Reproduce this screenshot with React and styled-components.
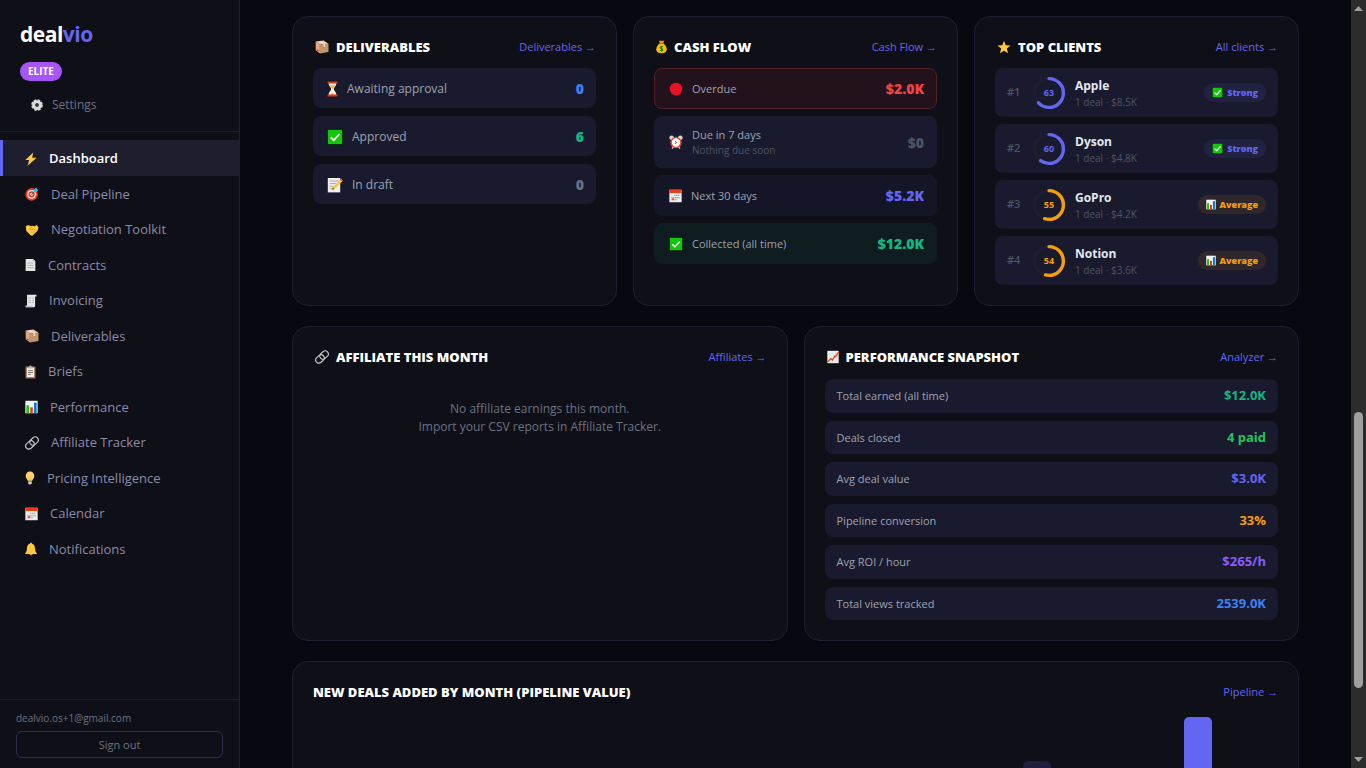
import styled, { createGlobalStyle } from "styled-components";

const colors = {
  page: "#080811",
  panel: "#0f0f18",
  row: "#1a1a2e",
  line: "#1e1e2e",
  indigo: "#6366f1",
  blue: "#3b82f6",
  green: "#10b981",
  lime: "#22c55e",
  amber: "#f59e0b",
  violet: "#8b5cf6",
  red: "#ef4444",
  slate: "#6b7280",
  muted: "#4b5563",
};

const GlobalStyle = createGlobalStyle`
  * {
    box-sizing: border-box;
  }

  body {
    margin: 0;
    background: ${colors.page};
    color: #fff;
    font-family: "Open Sans", "Noto Sans", sans-serif;
    font-size: 13px;
    line-height: 1.5;
  }

  a {
    color: inherit;
    text-decoration: none;
  }

  h2,
  p,
  ul {
    margin: 0;
    padding: 0;
  }

  ul {
    list-style: none;
  }
`;

/* ---------- icons ---------- */

// every glyph is drawn on a 16 unit high box, width is the first entry
const glyphs = {
  gear: [
    16,
    <>
      <circle cx="8" cy="8" r="6.2" fill="none" stroke="#d4d4d4" strokeWidth="3.2" strokeDasharray="3.27 1.6" />
      <circle cx="8" cy="8" r="4.4" fill="none" stroke="#dcdcdc" strokeWidth="4.2" />
      <circle cx="8" cy="8" r="2.2" fill="#3a3a3a" />
    </>,
  ],
  bolt: [
    14,
    <path d="M9.6 .4.4 9.2h4.4L3 15.8 13.6 6.4H8.4z" fill="#ffc83d" />,
  ],
  target: [
    16,
    <>
      <circle cx="7.6" cy="8.4" r="7.2" fill="#f03a17" />
      <circle cx="7.6" cy="8.4" r="5" fill="#fff" />
      <circle cx="7.6" cy="8.4" r="3.6" fill="#f03a17" />
      <circle cx="7.6" cy="8.4" r="1.6" fill="#fff" />
      <path d="M7.4 8.6 12 4" stroke="#0f6cbd" strokeWidth="1.2" />
      <path d="M10.4 5.6V2.8L13 .4l.5 2.2 2.1.5-2.5 2.5z" fill="#26c6f0" />
    </>,
  ],
  handshake: [
    16,
    <>
      <path d="M.8 3.6 3.6 2.4 7 3.8l1.4-.6 2.6.4 2.6-1.4 1.8 2.6-1 4-6 5.8-2-.6-4.8-5z" fill="#ffc83d" />
      <path d="M7.6 4.4 5.6 7.2l2 .4 2-1.2 4 3" fill="none" stroke="#e19747" strokeWidth=".9" />
      <path d="M10 12.4 8 10.6M11.6 11 9.4 9" stroke="#e19747" strokeWidth=".8" />
    </>,
  ],
  page: [
    13,
    <>
      <path d="M.8.8h8.6l2.8 2.8v11.6H.8z" fill="#e6e6e6" />
      <path d="M9.4.8v2.8h2.8z" fill="#b9b9b9" />
      <path d="M2.8 5.6h7.2M2.8 8.4h7.2M2.8 11.2h7.2" stroke="#a8a8a8" strokeWidth="1" />
    </>,
  ],
  receipt: [
    14,
    <>
      <path d="M2.4.8h11v2h-1.6v10.6q0 1.8-1.6 1.8H.8v-1.8h1.6z" fill="#e8e8e8" />
      <path d="M4 4.4h3M8.4 4.4h2M4 7h3M8.4 7h2M4 9.6h3M8.4 9.6h2" stroke="#b4b4b4" strokeWidth="1.2" />
      <path d="M.8 13.4h8v1.8h-8z" fill="#c3c3c3" />
    </>,
  ],
  box: [
    16,
    <>
      <path d="M.8 1.8 9.8.6l5.6 3.8-9.8 1z" fill="#e9c9a8" />
      <path d="M.8 1.8 5.6 5.4v10L.8 11.8z" fill="#deaa8c" />
      <path d="M5.6 5.4 15.4 4.4v9.4l-9.8 1.6z" fill="#c19669" />
      <path d="M4.4 1.4 9.8 5v3l1.8-.2V4.8L6.6 1z" fill="#f2e0cc" />
      <path d="M2 10.4l2 1.4v1.6L2 12z" fill="#e8283c" />
    </>,
  ],
  clipboard: [
    13,
    <>
      <rect x=".6" y="1.6" width="11.8" height="14" rx="1" fill="#a9714b" />
      <rect x="2.2" y="3" width="8.6" height="11" fill="#f1f1f1" />
      <path d="M3.7 3.8V1.8h1.4a1.4 1.4 0 0 1 2.8 0h1.4v2z" fill="#b6b6b6" />
      <path d="M3.6 6.4h5.8M3.6 8.6h5.8M3.6 10.8h3.6" stroke="#767676" strokeWidth="1.1" />
    </>,
  ],
  bars: [
    15,
    <>
      <rect x=".4" y=".8" width="14.2" height="14.4" fill="#f4f4f4" />
      <rect x="1.6" y="6" width="3" height="9.2" fill="#16c60c" />
      <rect x="6" y="8.4" width="3" height="6.8" fill="#f03a17" />
      <rect x="10.4" y="3" width="3" height="12.2" fill="#0078d7" />
    </>,
  ],
  link: [
    16,
    <g fill="none" stroke="#c9c9c9" strokeWidth="1.3">
      <rect x="5" y="2.2" width="10.6" height="7.2" rx="3.6" transform="rotate(-42 10.3 5.8)" />
      <rect x=".4" y="6.6" width="10.6" height="7.2" rx="3.6" transform="rotate(-42 5.7 10.2)" />
    </g>,
  ],
  bulb: [
    11,
    <>
      <path d="M5.5.6a4.9 4.9 0 0 1 4.9 5c0 2.4-1.7 3.4-2.3 5.6H2.9C2.3 9 .6 8 .6 5.6A4.9 4.9 0 0 1 5.5.6z" fill="#ffd36b" />
      <path d="M4.4 11V7.6L3.4 6.4M6.6 11V7.6l1-1.2" fill="none" stroke="#f7b02c" strokeWidth=".8" />
      <path d="M3.4 11.6h4.2v2.6l-1.2 1.2H4.6l-1.2-1.2z" fill="#c7ccd1" />
    </>,
  ],
  calendar: [
    15,
    <>
      <rect x=".4" y=".8" width="14.2" height="14.4" fill="#ececec" />
      <rect x=".4" y=".8" width="14.2" height="3.8" fill="#f03a17" />
      <path d="M5.6 7.4h7M2.6 9.8h10M2.6 12.2h7" stroke="#a6a6a6" strokeWidth="1.4" strokeDasharray="1.6 .7" />
      <rect x="3.4" y="10.4" width="2.4" height="2.4" fill="#f03a17" opacity=".7" />
    </>,
  ],
  bell: [
    14,
    <>
      <path d="M7 .6c.9 0 1.2.6 1.2 1.2 2.4.6 3.3 2.6 3.5 5.2.2 2.8.5 4.2 2 5.6v1.2H.3v-1.2c1.5-1.4 1.8-2.8 2-5.6.2-2.6 1.1-4.6 3.5-5.2C5.8 1.2 6.1.6 7 .6z" fill="#ffc83d" />
      <path d="M5.2 13.8h3.6a1.8 1.6 0 0 1-3.6 0z" fill="#e8a01e" />
    </>,
  ],
  hourglass: [
    11,
    <>
      <path d="M1.6 2h7.8c0 3.2-2.6 4.4-2.6 6s2.6 2.8 2.6 6H1.6c0-3.2 2.6-4.4 2.6-6S1.6 5.2 1.6 2z" fill="#f3efe9" />
      <path d="M2.6 4.2h5.8C7.8 5.8 6 6.8 5.5 8 5 6.8 3.2 5.8 2.6 4.2zM5.5 11.4l2 2.6h-4z" fill="#ffb43a" />
      <path d="M.6.4h9.8v2H.6zM.6 13.6h9.8v2H.6z" fill="#d8391b" />
    </>,
  ],
  check: [
    16,
    <>
      <rect x=".4" y=".4" width="15.2" height="15.2" fill="#16c60c" stroke="#06200a" strokeWidth=".8" />
      <path d="M3.8 8.4 6.8 11.2 12.4 5" fill="none" stroke="#fff" strokeWidth="1.7" />
    </>,
  ],
  memo: [
    16,
    <>
      <path d="M.8 1h12.4v14.4H.8z" fill="#efefef" />
      <path d="M2.6 4h8.4M2.6 6.6h6.4M2.6 9.2h4M2.6 11.8h3" stroke="#a9a9a9" strokeWidth="1" />
      <path d="M5 12.8 5.8 10.2 13.2 2.6l1.9 1.9-7.5 7.5z" fill="#ffc83d" />
      <path d="m13.2 2.6 1-1 1.8 1.9-.9 1z" fill="#e8604c" />
      <path d="m5 12.8.8-2.6 1.8 1.8z" fill="#8a5a2c" />
    </>,
  ],
  moneybag: [
    13,
    <>
      <path d="M3.6.6h6L8.8 3.6H4.4z" fill="#e39a12" />
      <path d="M4.4 4h4.4c2.6 2 3.9 4.4 3.9 6.8 0 3.2-2.2 4.6-6.2 4.6S.3 14 .3 10.8C.3 8.4 1.8 6 4.4 4z" fill="#ffb900" />
      <path d="M3.8 3.2h5.6v1.2H3.8z" fill="#b3740e" />
      <path d="M8.3 7.8q-1.8-1-3 0t.6 1.9q2.6.6 2 2-1 1.4-3.3.2M6.5 6.4v7.2" fill="none" stroke="#13881a" strokeWidth="1.2" />
    </>,
  ],
  red: [16, <circle cx="8" cy="8" r="7.2" fill="#e81224" />],
  alarm: [
    16,
    <>
      <circle cx="3" cy="3.2" r="2.6" fill="#cfd3d6" />
      <circle cx="13" cy="3.2" r="2.6" fill="#cfd3d6" />
      <path d="m3.4 15.6 1.8-2.4M12.6 15.6l-1.8-2.4" stroke="#cfd3d6" strokeWidth="1.5" />
      <circle cx="8" cy="8.6" r="5.6" fill="#fff" stroke="#e8482c" strokeWidth="1.7" />
      <path d="m6.6 6.8 2.2 2-2.2 1" fill="none" stroke="#444" strokeWidth=".9" />
    </>,
  ],
  star: [
    16,
    <path d="m8 .8 2 5.2 5.5.3-4.3 3.5 1.5 5.4L8 12.2l-4.7 3 1.5-5.4L.5 6.3 6 6z" fill="#ffc83d" />,
  ],
  trend: [
    14,
    <>
      <rect x=".4" y=".8" width="13.2" height="14.4" fill="#f2f2f2" />
      <path d="M.4 4.4h13.2M.4 8h13.2M.4 11.6h13.2M3.7.8v14.4M7 .8v14.4M10.3.8v14.4" stroke="#d3d8dc" strokeWidth=".6" />
      <path d="M.6 14 4.4 9.8l2 1.8L9.2 7l1.2.4 3.2-5.4" fill="none" stroke="#f03a17" strokeWidth="1.5" />
    </>,
  ],
};

const IconSvg = styled.svg`
  display: block;
  flex: none;
`;

const Icon = ({ name, size = 13 }) => {
  const [width, art] = glyphs[name];

  return (
    <IconSvg
      width={Math.round((width * size) / 16)}
      height={size}
      viewBox={`0 0 ${width} 16`}
      aria-hidden="true"
    >
      {art}
    </IconSvg>
  );
};

/* ---------- shell ---------- */

const Shell = styled.div`
  display: flex;
  height: 100vh;
  overflow: hidden;
`;

const Sidebar = styled.aside`
  display: flex;
  flex-direction: column;
  flex: none;
  width: 240px;
  background: ${colors.panel};
  border-right: 1px solid ${colors.line};
`;

const Brand = styled.div`
  display: flex;
  flex-direction: column;
  align-items: flex-start;
  padding: 18px 20px 16px;
  border-bottom: 1px solid ${colors.line};
`;

const Logo = styled.a`
  font-size: 21px;
  font-weight: 700;
  line-height: 32px;
  letter-spacing: -0.5px;

  span {
    color: ${colors.indigo};
  }
`;

const Plan = styled.span`
  margin-top: 12px;
  padding: 0 8px;
  border-radius: 20px;
  background: #a855f7;
  font-size: 10px;
  font-weight: 700;
  line-height: 19px;
`;

const SettingsLink = styled.a`
  display: flex;
  align-items: center;
  gap: 9px;
  margin-top: 14px;
  padding-left: 11px;
  color: ${colors.slate};
  font-size: 12px;
  line-height: 20px;
`;

const Nav = styled.nav`
  flex: 1;
  padding-top: 8px;
`;

const NavItem = styled.a`
  display: flex;
  align-items: center;
  gap: 12px;
  padding: 9px 20px 7px 22px;
  border-left: 3px solid ${(p) => (p.$active ? colors.indigo : "transparent")};
  background: ${(p) => (p.$active ? "#1e1e2e" : "transparent")};
  color: ${(p) => (p.$active ? "#fff" : "#8b8ba7")};
  font-weight: ${(p) => (p.$active ? 600 : 400)};
`;

const Account = styled.div`
  padding: 10px 16px;
  border-top: 1px solid ${colors.line};
  color: ${colors.slate};
  font-size: 10px;
  line-height: 16px;
`;

const SignOut = styled.button`
  display: block;
  width: 100%;
  margin-top: 5px;
  padding: 0;
  border: 1px solid #2d2d4e;
  border-radius: 6px;
  background: none;
  color: ${colors.slate};
  font-family: inherit;
  font-size: 11px;
  line-height: 25px;
`;

const Main = styled.main`
  display: flex;
  flex-direction: column;
  flex: 1;
  gap: 20px;
  min-width: 0;
  padding: 16px 52px 0;
  overflow: hidden;
`;

const Scrollbar = styled.div`
  display: flex;
  flex-direction: column;
  align-items: center;
  flex: none;
  width: 15px;
  padding: 6px 0;
  background: #2c2c2c;
`;

const ScrollSpace = styled.div`
  flex: ${(p) => p.$grow};
`;

const ScrollThumb = styled.div`
  flex: 276;
  width: 9px;
  border-radius: 5px;
  background: #9f9f9f;
`;

/* ---------- cards ---------- */

const CardRow = styled.section`
  display: grid;
  flex: none;
  grid-template-columns: repeat(${(p) => p.$columns}, 1fr);
  gap: 16px;
`;

const CardBox = styled.article`
  padding: 20px;
  border: 1px solid ${colors.line};
  border-radius: 16px;
  background: ${colors.panel};
`;

const CardHeader = styled.header`
  display: flex;
  align-items: center;
  justify-content: space-between;
  margin-bottom: ${(p) => p.$gap}px;
  line-height: 20px;
`;

const CardTitle = styled.h2`
  display: flex;
  align-items: center;
  gap: 7px;
  padding-left: ${(p) => (p.$icon ? 2 : 0)}px;
  font-size: 13px;
  font-weight: 800;
  text-transform: uppercase;
`;

const CardLink = styled.a`
  color: ${colors.indigo};
  font-size: 11px;
`;

const List = styled.ul`
  display: flex;
  flex-direction: column;
  gap: ${(p) => p.$gap}px;
`;

const Card = ({ title, icon, link, gap = 12, children }) => (
  <CardBox>
    <CardHeader $gap={gap}>
      <CardTitle $icon={icon}>
        {icon && <Icon name={icon} size={14} />}
        {title}
      </CardTitle>
      <CardLink href="#">{link} →</CardLink>
    </CardHeader>
    {children}
  </CardBox>
);

const Row = styled.li`
  display: flex;
  align-items: center;
  gap: 9px;
  border-radius: 8px;
  background: ${colors.row};
`;

const DeliverableRow = styled(Row)`
  padding: 10px 12px 9px 14px;
  color: #9ca3af;
  font-size: 12px;
  line-height: 20px;
`;

const CashRow = styled(Row)`
  padding: 9px 12px 9px 14px;
  border: 1px solid ${(p) => p.$border || "transparent"};
  background: ${(p) => p.$tint || colors.row};
`;

const CashText = styled.div`
  color: #9ca3af;
  font-size: 11px;
  line-height: 17px;

  small {
    display: block;
    color: ${colors.muted};
    font-size: 10px;
    line-height: 15px;
  }
`;

const Amount = styled.strong`
  margin-left: auto;
  color: ${(p) => p.$color};
  font-size: 14px;
  font-weight: 800;
  line-height: 21px;
`;

const ClientRow = styled(Row)`
  gap: 8px;
  min-height: 49px;
  padding: 6px 12px;
`;

const Rank = styled.span`
  width: 16px;
  color: ${colors.muted};
  font-size: 11px;
  font-weight: 600;
`;

const RingSvg = styled.svg`
  display: block;
  flex: none;

  text {
    font-size: 9px;
    font-weight: 700;
  }
`;

const ClientText = styled.div`
  color: #e2e8f0;
  font-size: 12px;
  font-weight: 700;
  line-height: 18px;

  small {
    display: block;
    color: ${colors.muted};
    font-size: 10px;
    font-weight: 400;
    line-height: 14px;
  }
`;

const Badge = styled.span`
  display: flex;
  align-items: center;
  gap: 4px;
  margin-left: auto;
  padding: 0 8px;
  border-radius: 20px;
  background: ${(p) => p.$color}1a;
  color: ${(p) => p.$color};
  font-size: 9px;
  font-weight: 800;
  line-height: 19px;
`;

const Empty = styled.p`
  padding-top: 21px;
  color: ${colors.slate};
  font-size: 12px;
  line-height: 18px;
  text-align: center;
`;

const StatRow = styled(Row)`
  justify-content: space-between;
  padding: 7px 12px;
  color: #9ca3af;

  span {
    font-size: 11px;
    line-height: 17px;
  }
`;

const StatValue = styled.strong`
  color: ${(p) => p.$color};
  font-weight: 700;
`;

const Chart = styled.div`
  display: grid;
  grid-template-columns: repeat(6, 1fr);
  align-items: end;
  justify-items: center;
  height: 120px;
`;

const Bar = styled.div`
  width: 28px;
  border-radius: 5px 5px 0 0;
  background: ${(p) => (p.$current ? colors.indigo : "#1f1f3d")};
`;

const navItems = [
  { label: "Dashboard", icon: "bolt" },
  { label: "Deal Pipeline", icon: "target" },
  { label: "Negotiation Toolkit", icon: "handshake" },
  { label: "Contracts", icon: "page" },
  { label: "Invoicing", icon: "receipt" },
  { label: "Deliverables", icon: "box" },
  { label: "Briefs", icon: "clipboard" },
  { label: "Performance", icon: "bars" },
  { label: "Affiliate Tracker", icon: "link" },
  { label: "Pricing Intelligence", icon: "bulb" },
  { label: "Calendar", icon: "calendar" },
  { label: "Notifications", icon: "bell" },
];

const deliverables = [
  { label: "Awaiting approval", icon: "hourglass", value: 0, color: colors.blue },
  { label: "Approved", icon: "check", value: 6, color: colors.green },
  { label: "In draft", icon: "memo", value: 0, color: colors.slate },
];

const cashFlow = [
  { label: "Overdue", icon: "red", value: "$2.0K", color: colors.red, tint: "#23121b", border: "#541f28" },
  { label: "Due in 7 days", note: "Nothing due soon", icon: "alarm", value: "$0", color: colors.muted },
  { label: "Next 30 days", icon: "calendar", value: "$5.2K", color: colors.indigo, tint: "#151528" },
  { label: "Collected (all time)", icon: "check", value: "$12.0K", color: colors.green, tint: "#0f1c20" },
];

const clients = [
  { name: "Apple", score: 63, total: "$8.5K" },
  { name: "Dyson", score: 60, total: "$4.8K" },
  { name: "GoPro", score: 55, total: "$4.2K" },
  { name: "Notion", score: 54, total: "$3.6K" },
];

const stats = [
  { label: "Total earned (all time)", value: "$12.0K", color: colors.green },
  { label: "Deals closed", value: "4 paid", color: colors.lime },
  { label: "Avg deal value", value: "$3.0K", color: colors.indigo },
  { label: "Pipeline conversion", value: "33%", color: colors.amber },
  { label: "Avg ROI / hour", value: "$265/h", color: colors.violet },
  { label: "Total views tracked", value: "2539.0K", color: colors.blue },
];

const months = [0, 0, 0, 0, 63, 100];

const Ring = ({ score, color }) => (
  <RingSvg width="36" height="36" viewBox="0 0 36 36">
    <circle cx="18" cy="18" r="14.4" fill="none" stroke="#1e1e2e" strokeWidth="3.4" />
    <circle
      cx="18"
      cy="18"
      r="14.4"
      fill="none"
      stroke={color}
      strokeWidth="3.4"
      strokeLinecap="round"
      pathLength="100"
      strokeDasharray={`${score} 100`}
      transform="rotate(-90 18 18)"
    />
    <text x="18" y="21" textAnchor="middle" fill={color}>
      {score}
    </text>
  </RingSvg>
);

const App = () => (
  <Shell>
    <GlobalStyle />

    <Sidebar>
      <Brand>
        <Logo href="#">
          deal<span>vio</span>
        </Logo>
        <Plan>ELITE</Plan>
        <SettingsLink href="#">
          <Icon name="gear" size={12} />
          Settings
        </SettingsLink>
      </Brand>

      <Nav>
        {navItems.map((item, i) => (
          <NavItem key={item.label} href="#" $active={i === 0}>
            <Icon name={item.icon} size={14} />
            {item.label}
          </NavItem>
        ))}
      </Nav>

      <Account>
        dealvio.os+1@gmail.com
        <SignOut type="button">Sign out</SignOut>
      </Account>
    </Sidebar>

    <Main>
      <CardRow $columns={3}>
        <Card title="Deliverables" icon="box" link="Deliverables" gap={11}>
          <List $gap={8}>
            {deliverables.map((item) => (
              <DeliverableRow key={item.label}>
                <Icon name={item.icon} size={16} />
                {item.label}
                <Amount $color={item.color}>{item.value}</Amount>
              </DeliverableRow>
            ))}
          </List>
        </Card>

        <Card title="Cash Flow" icon="moneybag" link="Cash Flow" gap={11}>
          <List $gap={7}>
            {cashFlow.map((item) => (
              <CashRow key={item.label} $tint={item.tint} $border={item.border}>
                <Icon name={item.icon} size={14} />
                <CashText>
                  {item.label}
                  {item.note && <small>{item.note}</small>}
                </CashText>
                <Amount $color={item.color}>{item.value}</Amount>
              </CashRow>
            ))}
          </List>
        </Card>

        <Card title="Top Clients" icon="star" link="All clients" gap={11}>
          <List $gap={7}>
            {clients.map((client, i) => {
              const strong = client.score >= 60;
              const color = strong ? colors.indigo : colors.amber;

              return (
                <ClientRow key={client.name}>
                  <Rank>#{i + 1}</Rank>
                  <Ring score={client.score} color={color} />
                  <ClientText>
                    {client.name}
                    <small>1 deal · {client.total}</small>
                  </ClientText>
                  <Badge $color={color}>
                    <Icon name={strong ? "check" : "bars"} size={11} />
                    {strong ? "Strong" : "Average"}
                  </Badge>
                </ClientRow>
              );
            })}
          </List>
        </Card>
      </CardRow>

      <CardRow $columns={2}>
        <Card title="Affiliate This Month" icon="link" link="Affiliates">
          <Empty>
            No affiliate earnings this month.
            <br />
            Import your CSV reports in Affiliate Tracker.
          </Empty>
        </Card>

        <Card title="Performance Snapshot" icon="trend" link="Analyzer">
          <List $gap={8}>
            {stats.map((stat) => (
              <StatRow key={stat.label}>
                <span>{stat.label}</span>
                <StatValue $color={stat.color}>{stat.value}</StatValue>
              </StatRow>
            ))}
          </List>
        </Card>
      </CardRow>

      <CardRow $columns={1}>
        <Card title="New Deals Added by Month (Pipeline Value)" link="Pipeline" gap={15}>
          <Chart>
            {months.map((value, i) => (
              <Bar key={i} $current={i === months.length - 1} style={{ height: `${value}%` }} />
            ))}
          </Chart>
        </Card>
      </CardRow>
    </Main>

    <Scrollbar aria-hidden="true">
      <svg width="9" height="5" viewBox="0 0 9 5">
        <path d="M4.5 0 9 5H0z" fill="#9f9f9f" />
      </svg>
      <ScrollSpace $grow={401} />
      <ScrollThumb />
      <ScrollSpace $grow={69} />
      <svg width="9" height="5" viewBox="0 0 9 5">
        <path d="M0 0h9L4.5 5z" fill="#9f9f9f" />
      </svg>
    </Scrollbar>
  </Shell>
);

export default App;
